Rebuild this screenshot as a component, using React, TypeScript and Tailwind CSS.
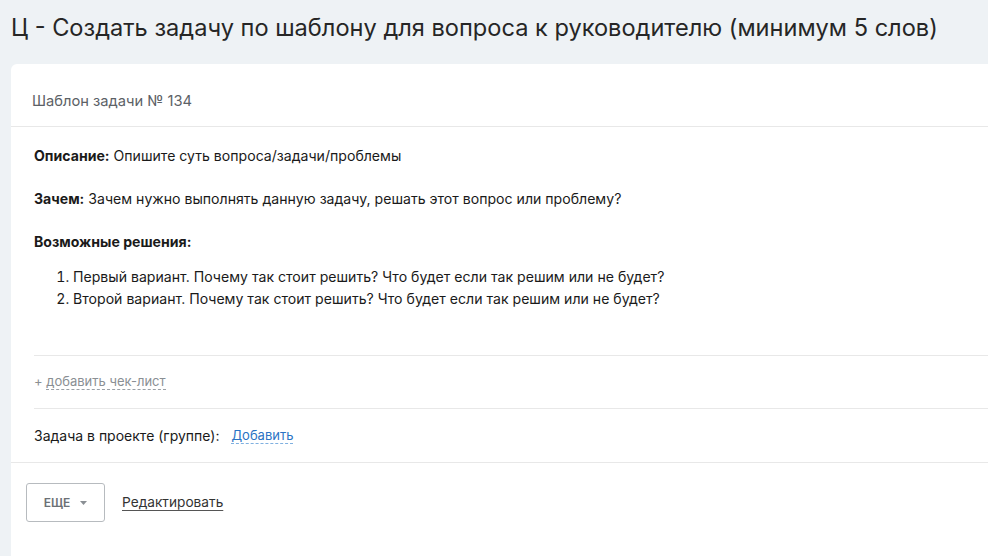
export default function App() {
  return (
    <div
      className="w-[988px] h-[556px] overflow-hidden bg-[#eef2f5] text-[#1f1f1f]"
      style={{ fontFamily: 'Inter, "Noto Sans", sans-serif' }}
    >
      <h1 className="pl-[11px] pt-[12px] h-[64px] text-[23.6px] leading-[32px] font-normal text-[#262626]">
        Ц - Создать задачу по шаблону для вопроса к руководителю (минимум 5 слов)
      </h1>

      <div className="ml-[11px] bg-white rounded-tl-[6px] h-[492px]">
        <div className="h-[63px] px-[21px] flex items-center pt-[13px] border-b border-[#e8e8e8] text-[14.7px] text-[#5c6166]">
          Шаблон задачи № 134
        </div>

        <div className="pl-[23px]">
          <div className="pt-[18px] text-[14.1px] leading-[22px] text-[#1a1a1a]">
            <p>
              <b className="font-bold">Описание:</b> Опишите суть вопроса/задачи/проблемы
            </p>
            <p className="mt-[21px]">
              <b className="font-bold">Зачем:</b> Зачем нужно выполнять данную задачу, решать этот вопрос или проблему?
            </p>
            <p className="mt-[21px] font-bold">Возможные решения:</p>
            <ol className="mt-[13px] pl-[39px] list-decimal">
              <li>Первый вариант. Почему так стоит решить? Что будет если так решим или не будет?</li>
              <li>Второй вариант. Почему так стоит решить? Что будет если так решим или не будет?</li>
            </ol>
          </div>

          <div className="mt-[45px] border-t border-[#e8e8e8] h-[53px] flex items-center text-[13px] text-[#8a8f94]">
            <span>+&nbsp;</span>
            <span className="border-b border-dashed border-[#9aa0a6] leading-[15px]">добавить чек-лист</span>
          </div>

          <div className="border-t border-[#e8e8e8] h-[54px] flex items-center text-[14px] text-[#1a1a1a]">
            <span>Задача в проекте (группе):</span>
            <span className="ml-[12px] text-[13px] text-[#2a73c4] border-b border-dashed border-[#7fb0e0] leading-[15px]">
              Добавить
            </span>
          </div>
        </div>

        <div className="border-t border-[#e8e8e8] flex items-center gap-[17px] pl-[15px] pt-[20px]">
          <button className="w-[79px] h-[39px] border border-[#b7bbbf] rounded-[3px] flex items-center justify-center gap-[10px] text-[12px] font-semibold text-[#6b7075]">
            ЕЩЕ
            <svg width="7" height="4" viewBox="0 0 7 4">
              <path d="M0 0h7L3.5 4z" fill="#8a8f94" />
            </svg>
          </button>
          <span className="text-[13.7px] text-[#333] underline underline-offset-[3px] decoration-[#555]">Редактировать</span>
        </div>
      </div>
    </div>
  )
}
